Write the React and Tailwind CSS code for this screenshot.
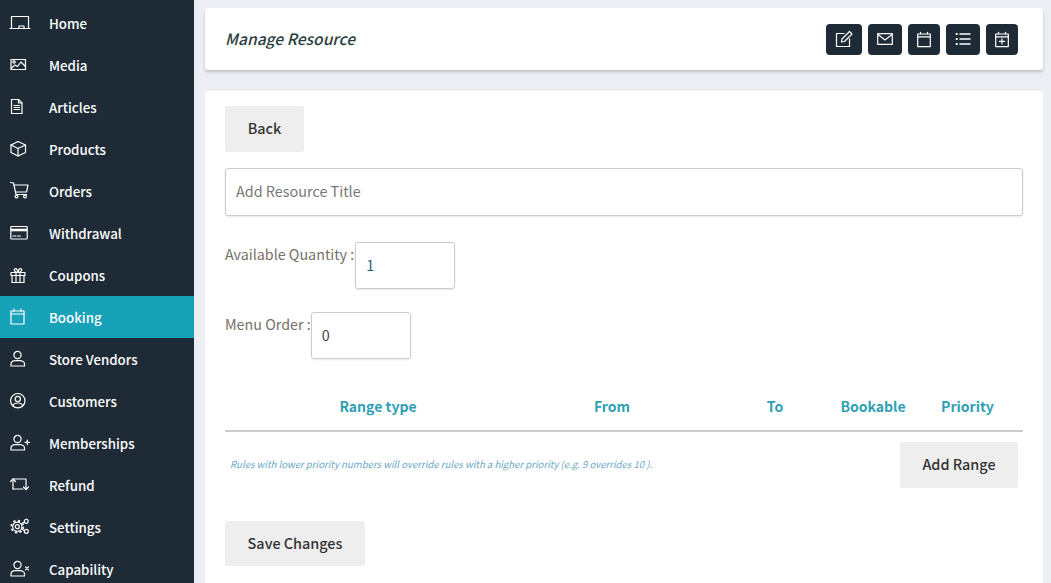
import React from "react";

const S = ({ children, size = 22 }) => (
  <svg width={size} height={size} viewBox={`0 0 ${size} ${size}`} fill="none" stroke="currentColor" strokeWidth="1.2" strokeLinecap="round" strokeLinejoin="round" className="block overflow-visible">
    {children}
  </svg>
);

const person = (
  <>
    <circle cx="7.5" cy="7" r="3.6" />
    <path d="M1 18V16C1 13.8 3 12.6 5 12.6H10C12 12.6 14.5 13.8 14.5 16V18Z" />
  </>
);

const icons = {
  Home: <><path d="M1.5 16V4.5H18.5V16" /><path d="M0 16.5H20" /><path d="M9 16.5V14H14V16.5" /></>,
  Media: <><rect x="1" y="5.5" width="14.5" height="10" /><circle cx="4" cy="8" r="1.2" /><path d="M1.5 14L5 11L7.5 12.5L11 8L15.5 12.5" /></>,
  Articles: <><path d="M1.5 3.5H8.5L12 7V17.5H1.5Z" /><path d="M8.5 3.5V7H12" /><path d="M4 9.5H9.5M4 11.5H9.5M4 13.5H9.5" /></>,
  Products: <><path d="M8 3.5L15.5 7V14.5L8 18L1 14.5V7Z" /><path d="M1 7L8 10.5L15.5 7M8 10.5V18" /></>,
  Orders: <><path d="M0.5 2.5L3.5 3L6 14.5H16.5" /><path d="M4.2 5H18L16.5 12H5.5" /><circle cx="6.5" cy="16.5" r="1.4" /><circle cx="15" cy="16.5" r="1.4" /></>,
  Withdrawal: <><rect x="0.8" y="4.5" width="16.4" height="12.5" rx="0.8" /><path d="M1 8H17" strokeWidth="2.6" strokeLinecap="butt" /><path d="M3 14H6M7.5 14H10.5" /></>,
  Coupons: <><rect x="1" y="8.5" width="14" height="3" /><path d="M2 11.5V18.5H14V11.5" /><path d="M6 8.5V18.5M10 8.5V18.5" /><path d="M8 8.5C5 8 3.5 6.5 4.5 5C6 3.5 8 6 8 8.5C8 6 10 3.5 11.5 5C12.5 6.5 11 8 8 8.5Z" /></>,
  Booking: <><rect x="1" y="5" width="13" height="13" /><path d="M1 8H14M4 3V5M11 3V5" /></>,
  "Store Vendors": person,
  Customers: <><circle cx="7.8" cy="10.7" r="7.2" /><circle cx="7.8" cy="9" r="2.6" /><path d="M3 15.8C3.6 13.4 5.6 13 7.8 13C10 13 12 13.4 12.6 15.8" /></>,
  Memberships: <>{person}<path d="M15 10.3H19.6M17.3 8V12.6" /></>,
  Refund: <><path d="M3 15V5H16V15.5" /><path d="M0.5 7.5L3 5L5.5 7.5M13.5 13L16 15.5L18.5 13M3 15H13" /></>,
  Settings: <><circle cx="7.3" cy="10.7" r="4.6" /><circle cx="7.3" cy="10.7" r="6" strokeWidth="1.8" strokeDasharray="2.2 2.5" strokeLinecap="butt" /><circle cx="7.3" cy="10.7" r="2" /><circle cx="16.3" cy="5.3" r="2" /><circle cx="16.3" cy="15.3" r="2" /><path d="M12 7.5L14.5 6M12 13.5L14.5 14.5" /></>,
  Capability: <>{person}<path d="M15.5 8.8L18.5 11.8M18.5 8.8L15.5 11.8" /></>,
};

const items = Object.keys(icons);

const tools = [
  ["w-[36px]", <><path d="M9 3.5H1.5V16.5H14.5V9" /><path d="M6.5 12L7 9L14.5 1.5L17 4L9.5 11.5Z" /></>],
  ["w-[34px]", <><rect x="1.7" y="3.7" width="14.6" height="10.6" /><path d="M2 4.5L9 10L16 4.5" /></>],
  ["w-[32px]", <><rect x="2.7" y="4" width="12.6" height="12.6" /><path d="M2.7 6.8H15.3M5.5 2.3V4M12.5 2.3V4" /></>],
  ["w-[34px]", <><path d="M6 4H16M6 9H16M6 14H16" strokeWidth="1.5" /><path d="M2.5 4H3M2.5 9H3M2.5 14H3" strokeWidth="1.8" /></>],
  ["w-[32px]", <><rect x="2.7" y="4" width="12.6" height="12.6" /><path d="M2.7 6.8H15.3M5.5 2.3V4M12.5 2.3V4M9 8.8V14M6.4 11.4H11.6" /></>],
];

const heads = [
  ["Range type", "pl-[34px]"], ["From", ""], ["To", ""], ["Bookable", ""], ["Priority", ""],
];

const font = "font-['Noto_Sans_CJK_SC','Noto_Sans',sans-serif]";
const field = "rounded-[3px] border border-[#cccccc] px-[10px] pb-[3px] text-[14.4px] shadow-[0_1px_2px_rgba(0,0,0,0.1)]";
const btn = "rounded-[2px] bg-[#eeeeee] pb-[2px] text-[14.4px] font-medium text-[#333]";

export default function App() {
  return (
    <div className={`flex h-[583px] overflow-hidden bg-[#eceef3] ${font}`}>
      <aside className="w-[194px] shrink-0 bg-[#1e2b37] pt-[2px] overflow-hidden">
        {items.map((label) => (
          <div
            key={label}
            className={`flex h-[42px] items-center pl-[10px] text-[13.3px] font-medium text-white ${label === "Booking" ? "bg-[#17a2b8]" : ""}`}
          >
            <span className="flex w-[39px] shrink-0"><S>{icons[label]}</S></span>
            <span className="pt-[2px]">{label}</span>
          </div>
        ))}
      </aside>

      <main className="flex w-[838px] shrink-0 flex-col ml-[11px] pt-2">
        <header className="flex h-[62px] shrink-0 items-center justify-between rounded-[3px] bg-white pl-5 pr-[25px] shadow-[0_2px_3px_rgba(0,0,0,0.2)]">
          <h1 className="text-[15.6px] font-medium italic text-[#2c3e3f]">Manage Resource</h1>
          <div className="flex gap-[6px]">
            {tools.map(([w, icon], i) => (
              <button key={i} className={`flex h-[31px] ${w} items-center justify-center rounded-[4px] bg-[#1e2b37] text-white`}>
                <S size={18}>{icon}</S>
              </button>
            ))}
          </div>
        </header>

        <section className="mt-[21px] flex-1 rounded-t-[3px] bg-white pl-5 pr-5 pt-[15px]">
          <button className={`h-[46px] w-[79px] ${btn}`}>Back</button>

          <input
            readOnly
            placeholder="Add Resource Title"
            className={`mt-4 block h-[48px] w-full ${field} text-[#555] placeholder:text-[#777]`}
          />

          <div className="mt-[26px] flex items-start">
            <label className="pt-[1px] text-[14.3px] text-[#766f68]">Available Quantity :</label>
            <input readOnly value="1" className={`ml-[1px] h-[47px] w-[100px] ${field} text-[#275a7a]`} />
          </div>

          <div className="mt-[23px] flex items-start">
            <label className="pt-[1px] text-[14.3px] text-[#766f68]">Menu Order :</label>
            <input readOnly value="0" className={`h-[47px] w-[100px] ${field} text-[#444]`} />
          </div>

          <div className="mt-[26px] grid h-[47px] grid-cols-[272px_230px_96px_100px_89px] items-center border-b-2 border-[#cccccc] pb-[2px] text-center text-[14px] font-semibold text-[#2f9fb5]">
            {heads.map(([h, p]) => (
              <div key={h} className={p}>{h}</div>
            ))}
          </div>

          <div className="mt-[10px] flex items-center justify-between pl-[5px] pr-[5px]">
            <p className="pb-[2px] text-[9.6px] italic text-[#6aa8c4]">Rules with lower priority numbers will override rules with a higher priority (e.g. 9 overrides 10 ).</p>
            <button className={`h-[46px] w-[118px] ${btn}`}>Add Range</button>
          </div>

          <button className={`mt-[33px] h-[45px] w-[140px] ${btn}`}>Save Changes</button>
        </section>
      </main>
    </div>
  );
}
